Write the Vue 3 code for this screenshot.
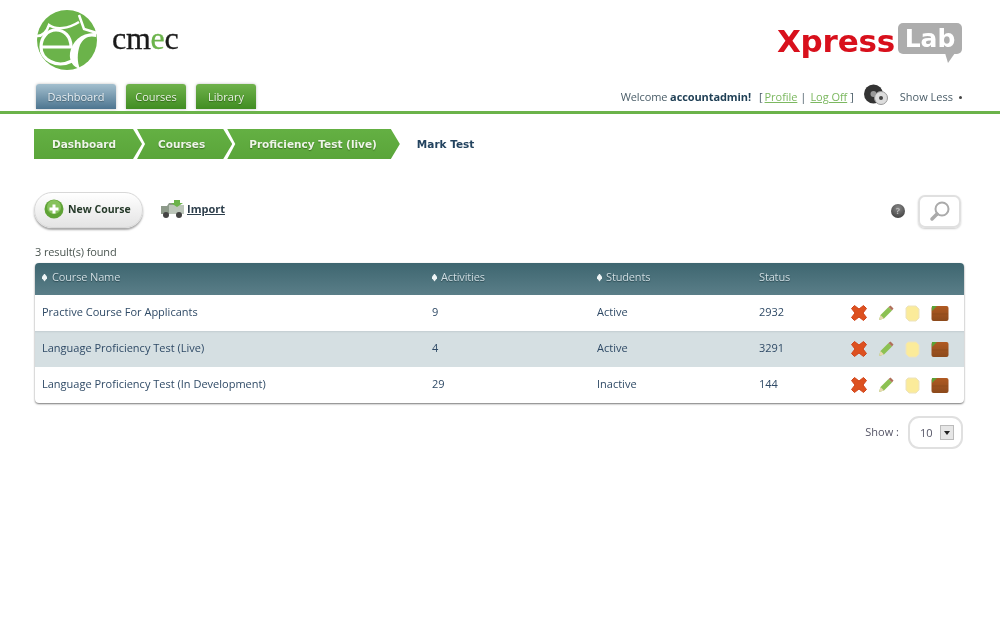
<script setup>
const rows = [
  { name: 'Practive Course For Applicants', activities: 9, students: 'Active', status: 2932 },
  { name: 'Language Proficiency Test (Live)', activities: 4, students: 'Active', status: 3291 },
  { name: 'Language Proficiency Test (In Development)', activities: 29, students: 'Inactive', status: 144 }
]
const crumbs = ['Dashboard', 'Courses', 'Proficiency Test (live)']
const tabs = ['Dashboard', 'Courses', 'Library']
const heads = [
  { label: 'Course Name', sort: true },
  { label: 'Activities', sort: true },
  { label: 'Students', sort: true },
  { label: 'Status', sort: false },
  { label: '', sort: false }
]
</script>

<template>
  <div class="page">
    <header class="top">
      <div class="brand">
        <svg class="logo" width="62" height="62" viewBox="0 0 62 62">
          <circle cx="31" cy="31" r="30" fill="#6bb34a" />
          <path d="M1 27 C7 27 11 22 13 16 C20 21 32 20 43 13" fill="none" stroke="#fff" stroke-width="2.5" />
          <path d="M43 6 L48 20 L61 24" fill="none" stroke="#fff" stroke-width="2.5" />
          <path d="M5 38 H35 C35 27 28 21 20 21 C11 21 5 29 5 38 C5 50 20 60 36 52" fill="none" stroke="#fff" stroke-width="3.2" />
          <path d="M60 24 C46 23 36 32 34 44 C33 52 37 58 44 60 C41 53 41 44 44 36 C47 29 53 26 60 28 Z" fill="#fff" />
        </svg>
        <span class="cmec">cm<i>e</i>c</span>
      </div>
      <div class="xpress">
        <span class="xp">Xpress</span>
        <span class="lab">Lab<svg class="tail" width="10" height="10" viewBox="0 0 10 10"><path d="M0 0H10L3 10Z" fill="#adadad" /></svg></span>
      </div>
    </header>

    <nav class="navrow">
      <div class="tabs">
        <a v-for="(t, i) in tabs" :key="t" class="tab" :class="{ current: i === 0, wide: i === 0 }">{{ t }}</a>
      </div>
      <div class="user">
        <span class="welcome">Welcome <b>accountadmin!</b></span>
        <span class="links">[<a class="profile">Profile</a>|<a class="logoff">Log Off</a>]</span>
        <svg class="disc" width="25" height="22" viewBox="0 0 25 22">
          <circle cx="9.500" cy="10" r="9.500" fill="#333" />
          <circle cx="9.500" cy="10" r="3" fill="#999" />
          <circle cx="17" cy="14" r="6.500" fill="#ddd" stroke="#999" />
          <circle cx="17" cy="14" r="2" fill="#444" />
        </svg>
        <span class="less">Show Less</span>
        <span class="dot"></span>
      </div>
    </nav>

    <main class="content">
      <div class="crumbs">
        <a v-for="(c, i) in crumbs" :key="c" class="crumb" :class="'crumb-' + i">{{ c }}</a>
        <span class="crumb-current">Mark Test</span>
      </div>

      <div class="toolbar">
        <button class="new">
          <svg width="20" height="20" viewBox="0 0 20 20">
            <circle cx="10" cy="10" r="9.500" fill="#5fa336" />
            <circle cx="10" cy="8" r="7" fill="#86c25c" />
            <path d="M10 5.500v9M5.500 10h9" stroke="#fff" stroke-width="3" />
          </svg>
          New Course
        </button>
        <a class="import">
          <svg width="25" height="20" viewBox="0 0 25 20">
            <path d="M1 7h6l2-3h8v11H1Z" fill="#8d9a8a" />
            <rect x="9" y="6" width="15" height="9" fill="#bcc6ba" />
            <path d="M14 1h6v3h3l-6 4-6-4h3Z" fill="#6bb34a" />
            <circle cx="6" cy="16" r="3" fill="#444" />
            <circle cx="19" cy="16" r="3" fill="#444" />
          </svg>
          <span>Import</span>
        </a>
        <div class="spacer"></div>
        <span class="help">?</span>
        <div class="search">
          <svg width="24" height="24" viewBox="0 0 24 24">
            <circle cx="14" cy="10" r="6.500" fill="#fff" stroke="#aaa" stroke-width="2" />
            <path d="M9 15l-5 5" stroke="#aaa" stroke-width="3.500" stroke-linecap="round" />
          </svg>
        </div>
      </div>

      <p class="found">3 result(s) found</p>

      <div class="table">
        <div class="row head">
          <div v-for="h in heads" :key="h.label" class="cell">
            <span v-if="h.sort" class="sort"></span>{{ h.label }}
          </div>
        </div>
        <div v-for="(r, i) in rows" :key="r.name" class="row" :class="{ alt: i === 1 }">
          <div class="cell">{{ r.name }}</div>
          <div class="cell">{{ r.activities }}</div>
          <div class="cell">{{ r.students }}</div>
          <div class="cell">{{ r.status }}</div>
          <div class="cell actions">
            <svg width="16" height="16" viewBox="0 0 16 16">
              <path d="M3.500 .500L8 4l4.500-3.500 3 3L12 8l3.500 4.500-3 3L8 12l-4.500 3.500-3-3L4 8 .500 3.500Z" fill="#dd5120" stroke="#d0441a" stroke-linejoin="round" />
            </svg>
            <svg width="16" height="16" viewBox="0 0 16 16">
              <path d="M1 15l1.500-5L10.500 2l3.500 3.500-8 8Z" fill="#8cc152" />
              <path d="M10.500 2L12.500 .500l3 3L14 5.500Z" fill="#b0705a" />
              <path d="M1 15l1.500-5 3.500 3.500Z" fill="#e8d9b0" />
            </svg>
            <svg width="15" height="17" viewBox="0 0 15 17">
              <path d="M3 1h8l3 3v9l-3 3H4L1 13V3Z" fill="#fbeb9a" stroke="#ece3c0" />
            </svg>
            <svg width="18" height="16" viewBox="0 0 18 16">
              <defs>
                <linearGradient id="box" x1="0" y1="0" x2="0" y2="1">
                  <stop offset="0" stop-color="#b05a22" />
                  <stop offset="1" stop-color="#8c4a1c" />
                </linearGradient>
              </defs>
              <rect x="0.500" y="1" width="17" height="15" rx="2" fill="url(#box)" />
              <path d="M1 9h16" stroke="#8f4c1c" stroke-width="1" />
              <path d="M1 1h5L1 6Z" fill="#5aa136" />
            </svg>
          </div>
        </div>
      </div>

      <div class="pager">
        <span>Show :</span>
        <div class="select">
          <span>10</span>
          <span class="arrow"></span>
        </div>
      </div>
    </main>
  </div>
</template>

<style>
html, body { margin: 0; background: #fff; }
</style>

<style scoped>
.page {
  width: 1000px;
  height: 636px;
  overflow: hidden;
  background: #fff;
  font-family: "Open Sans", sans-serif;
  font-size: 11px;
  color: #33495f;
  filter: blur(0.6px);
}
.top {
  height: 84px;
  box-sizing: border-box;
  padding: 9px 38px 0 36px;
  display: flex;
  justify-content: space-between;
}
.brand { display: flex; gap: 14px; }
.logo { display: block; }
.cmec {
  font-family: "Liberation Serif", serif;
  font-size: 32px;
  letter-spacing: -0.3px;
  line-height: 58px;
  color: #1a1a1a;
  -webkit-text-stroke: 0.3px #1a1a1a;
}
.cmec i { font-style: normal; color: #6bb34a; -webkit-text-stroke: 0.3px #6bb34a; }
.xpress { display: flex; align-items: flex-start; gap: 3px; padding-top: 14px; }
.xp {
  font-family: "DejaVu Sans", sans-serif;
  font-weight: 700;
  font-size: 31px;
  letter-spacing: -0.2px;
  line-height: 36px;
  color: #d8101c;
}
.lab {
  position: relative;
  width: 64px;
  height: 31px;
  background: #adadad;
  border-radius: 5px;
  color: #fff;
  font-family: "DejaVu Sans", sans-serif;
  font-weight: 700;
  font-size: 25px;
  line-height: 31px;
  text-align: center;
}
.tail { position: absolute; right: 7px; bottom: -9px; display: block; }
.navrow {
  box-sizing: border-box;
  padding: 0 38px 0 36px;
  display: flex;
  justify-content: space-between;
  align-items: flex-end;
  border-bottom: 3px solid #6bb34a;
  height: 30px;
}
.tabs { display: flex; gap: 10px; align-self: flex-end; margin-bottom: 2px; }
.tab {
  width: 60px;
  height: 25px;
  box-sizing: border-box;
  line-height: 25px;
  text-align: center;
  border-radius: 3px 3px 0 0;
  color: #eaf2e4;
  font-size: 11px;
  background: linear-gradient(#6fb24c, #418d22);
  box-shadow: 0 0 3px #bbb;
  text-shadow: 0 1px 1px #2e6315;
}
.tab.wide { width: 80px; }
.tab.current {
  background: linear-gradient(#a3bfce, #4d7590);
  color: #e8eef2;
  text-shadow: 0 1px 1px #44606f;
}
.user { display: flex; align-items: center; height: 25px; margin-bottom: 2px; color: #4a5d68; }
.user b { color: #1f3f55; }
.welcome { letter-spacing: -0.1px; }
.links { margin-left: 8px; display: flex; }
.links a { color: #7cb860; text-decoration: underline; letter-spacing: -0.05px; }
.profile { margin: 0 3px 0 2px; }
.logoff { margin: 0 3px 0 4px; }
.disc { margin: -3px 0 0 10px; }
.less { margin-left: 11px; }
.dot { width: 3px; height: 3px; margin-left: 6px; margin-top: 2px; background: #444; border-radius: 50%; }

.content { padding: 15px 36px 0 34px; }
.crumbs { display: flex; align-items: center; height: 30px; }
.crumb {
  height: 30px;
  box-sizing: border-box;
  margin-left: -5px;
  line-height: 31px;
  background: linear-gradient(#64b043, #5aa53a);
  color: #eef5e8;
  font-family: "DejaVu Sans", sans-serif;
  font-size: 10.5px;
  font-weight: 700;
  text-shadow: 0 1px 1px #3a6e22;
  clip-path: polygon(0 0, calc(100% - 9px) 0, 100% 50%, calc(100% - 9px) 100%, 0 100%, 8px 50%);
}
.crumb-0 {
  margin-left: 0;
  padding: 0 26px 0 18px;
  clip-path: polygon(0 0, calc(100% - 9px) 0, 100% 50%, calc(100% - 9px) 100%, 0 100%);
}
.crumb-1 { padding: 0 27px 0 21px; }
.crumb-2 { padding: 0 23px 0 22px; }
.crumb-current {
  margin-left: 17px;
  font-family: "DejaVu Sans", sans-serif;
  font-weight: 700;
  font-size: 10.5px;
  color: #23435f;
}
.toolbar { display: flex; align-items: center; margin-top: 32px; height: 37px; }
.new {
  width: 109px;
  height: 36px;
  padding: 0 0 2px 9px;
  display: flex;
  align-items: center;
  gap: 4px;
  border: 1px solid #d8d8d8;
  border-radius: 18px;
  background: linear-gradient(#fff, #e4e4e4);
  box-shadow: 0 2px 2px #a8a8a8;
  font: 700 10.5px "Open Sans", sans-serif;
  color: #263a2a;
}
.import { display: flex; align-items: center; gap: 2px; margin-left: 17px; font-weight: 700; color: #2e3f4c; margin-top: -2px; }
.import span { text-decoration: underline; }
.spacer { flex: 1; }
.help {
  width: 14px;
  height: 14px;
  margin-top: 2px;
  border-radius: 50%;
  background: radial-gradient(circle at 50% 30%, #888, #333);
  color: #bbb;
  font-size: 9px;
  font-weight: 700;
  line-height: 14px;
  text-align: center;
}
.search {
  margin: 3px 3px 0 13px;
  width: 43px;
  height: 33px;
  box-sizing: border-box;
  border: 2px solid #e0e0e0;
  border-radius: 7px;
  box-shadow: 0 1px 2px #ccc;
  display: flex;
  align-items: center;
  justify-content: center;
}
.found { margin: 16px 0 0 1px; height: 15px; line-height: 15px; color: #4a5550; letter-spacing: -0.12px; }
.table {
  margin: 4px 0 0 1px;
  width: 929px;
  border-radius: 4px;
  overflow: hidden;
  box-shadow: 0 1px 2px #777;
}
.row {
  display: grid;
  grid-template-columns: 397px 165px 162px 92px 1fr;
  height: 36px;
  align-items: center;
  color: #2f4a66;
}
.cell { padding-bottom: 4px; }
.row.alt { background: #d5dfe2; box-shadow: inset 0 2px 2px -1px #c2ccd0; }
.row.head {
  height: 32px;
  background: linear-gradient(#3e6670, #5a7e88);
  color: #cfdde2;
  text-shadow: 0 1px 1px #2a4850;
  letter-spacing: -0.15px;
}
.head .cell { padding-bottom: 6px; }
.cell:first-child { padding-left: 7px; }
.sort {
  display: inline-block;
  width: 5px;
  height: 8px;
  margin: 0 4px 0 0;
  background: #eef4f5;
  vertical-align: -1px;
  clip-path: polygon(50% 0, 100% 40%, 100% 60%, 50% 100%, 0 60%, 0 40%);
}
.cell:first-child .sort { margin-right: 5px; }
.actions { display: flex; align-items: center; gap: 11px; padding-bottom: 0; }
.pager {
  margin-top: 13px;
  padding-right: 1px;
  display: flex;
  justify-content: flex-end;
  align-items: center;
  gap: 9px;
  color: #556;
}
.pager > span { margin-top: -2px; }
.select {
  width: 55px;
  height: 33px;
  box-sizing: border-box;
  border: 2px solid #e0e0e0;
  border-radius: 11px;
  display: flex;
  align-items: center;
  justify-content: space-between;
  padding: 0 7px 0 10px;
}
.arrow {
  position: relative;
  width: 14px;
  height: 15px;
  box-sizing: border-box;
  border: 1px solid #bbb;
  background: #e6e6e6;
}
.arrow::after {
  content: "";
  position: absolute;
  left: 3px;
  top: 5px;
  border: 3px solid transparent;
  border-top: 4px solid #222;
  border-bottom: 0;
}
</style>
